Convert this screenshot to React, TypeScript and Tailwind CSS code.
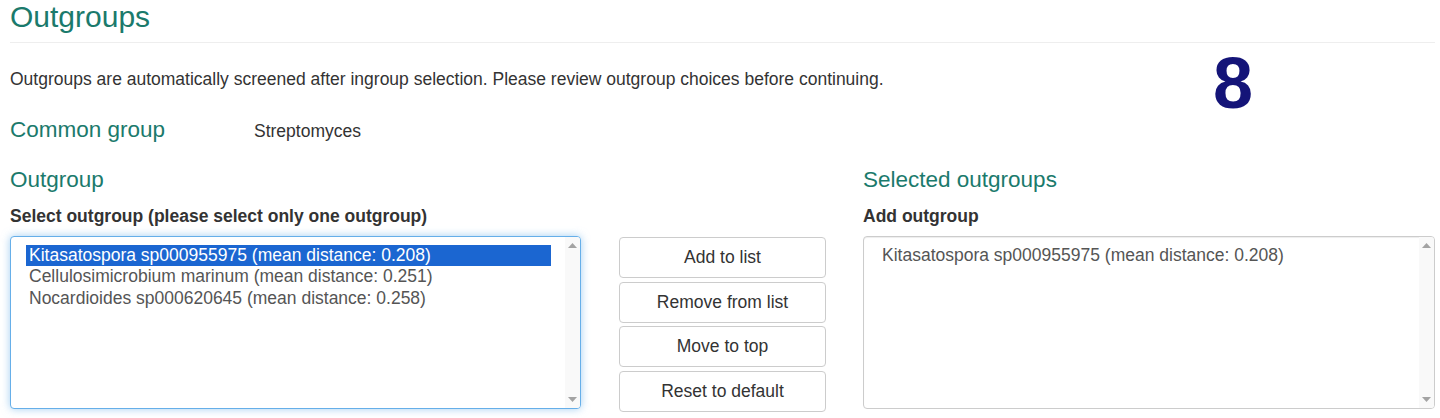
import React from "react";

const TEAL = "text-[#1b7a6c]";

function FakeScrollbar() {
  return (
    <div className="absolute right-0 top-0 bottom-0 w-[15px] bg-[#f9f9f9] flex flex-col justify-between items-center py-[6px]">
      <svg width="9" height="5" viewBox="0 0 9 5">
        <path d="M0 5 L4.5 0 L9 5 Z" fill="#a3a3a3" />
      </svg>
      <svg width="9" height="5" viewBox="0 0 9 5">
        <path d="M0 0 L4.5 5 L9 0 Z" fill="#a3a3a3" />
      </svg>
    </div>
  );
}

export default function App() {
  const options = [
    "Kitasatospora sp000955975 (mean distance: 0.208)",
    "Cellulosimicrobium marinum (mean distance: 0.251)",
    "Nocardioides sp000620645 (mean distance: 0.258)",
  ];
  const buttons = ["Add to list", "Remove from list", "Move to top", "Reset to default"];

  return (
    <div className="relative min-h-screen bg-white pl-[10px] pr-[5px] text-[#333] font-['Liberation_Sans',Arial,sans-serif]">
      {/* page title */}
      <h2 className={`${TEAL} text-[30px] leading-[33px] pb-[9px] border-b border-[#eee]`}>
        Outgroups
      </h2>

      <p className="mt-[24px] text-[17.5px] leading-[24px]">
        Outgroups are automatically screened after ingroup selection. Please review outgroup choices
        before continuing.
      </p>

      {/* step number */}
      <div className="absolute left-[1213px] top-[47px] text-[72px] leading-[72px] font-bold text-[#141478]">
        8
      </div>

      <div className="mt-[25.5px] flex items-baseline">
        <h4 className={`${TEAL} w-[244px] text-[22.5px] leading-[25px]`}>Common group</h4>
        <span className="text-[17.5px] leading-[24px]">Streptomyces</span>
      </div>

      <div className="mt-[24px] flex">
        {/* outgroup column */}
        <div className="w-[571px]">
          <h4 className={`${TEAL} text-[22.5px] leading-[25px]`}>Outgroup</h4>
          <label className="block mt-[12.5px] text-[17.5px] leading-[24px] font-bold">
            Select outgroup (please select only one outgroup)
          </label>
          <div className="relative mt-[7.5px] h-[173px] rounded-[4px] border border-[#66afe9] shadow-[0_0_8px_rgba(102,175,233,0.6)] overflow-hidden bg-white">
            <div className="pt-[8px] pl-[15px] pr-[29px] text-[17.5px] text-[#555]">
              {options.map((o, i) => (
                <div
                  key={o}
                  className={
                    i === 0
                      ? "h-[21.5px] leading-[21.5px] pl-[3px] bg-[#1b66d1] text-white"
                      : "h-[21.5px] leading-[21.5px] pl-[3px]"
                  }
                >
                  {o}
                </div>
              ))}
            </div>
            <FakeScrollbar />
          </div>
        </div>

        {/* action buttons */}
        <div className="ml-[38px] w-[207px] pt-[70.5px] flex flex-col gap-[3.5px]">
          {buttons.map((b) => (
            <button
              key={b}
              className="h-[41px] rounded-[4px] border border-[#ccc] bg-white text-[17.5px] text-[#333]"
            >
              {b}
            </button>
          ))}
        </div>

        {/* selected column */}
        <div className="ml-[37px] w-[572px]">
          <h4 className={`${TEAL} text-[22.5px] leading-[25px]`}>Selected outgroups</h4>
          <label className="block mt-[12.5px] text-[17.5px] leading-[24px] font-bold">Add outgroup</label>
          <div className="relative mt-[7.5px] h-[173px] rounded-[4px] border border-[#ccc] shadow-[inset_0_1px_1px_rgba(0,0,0,0.075)] overflow-hidden bg-white">
            <div className="pt-[8px] pl-[15px] pr-[29px] text-[17.5px] text-[#555]">
              <div className="h-[21.5px] leading-[21.5px] pl-[3px]">{options[0]}</div>
            </div>
            <FakeScrollbar />
          </div>
        </div>
      </div>
    </div>
  );
}
